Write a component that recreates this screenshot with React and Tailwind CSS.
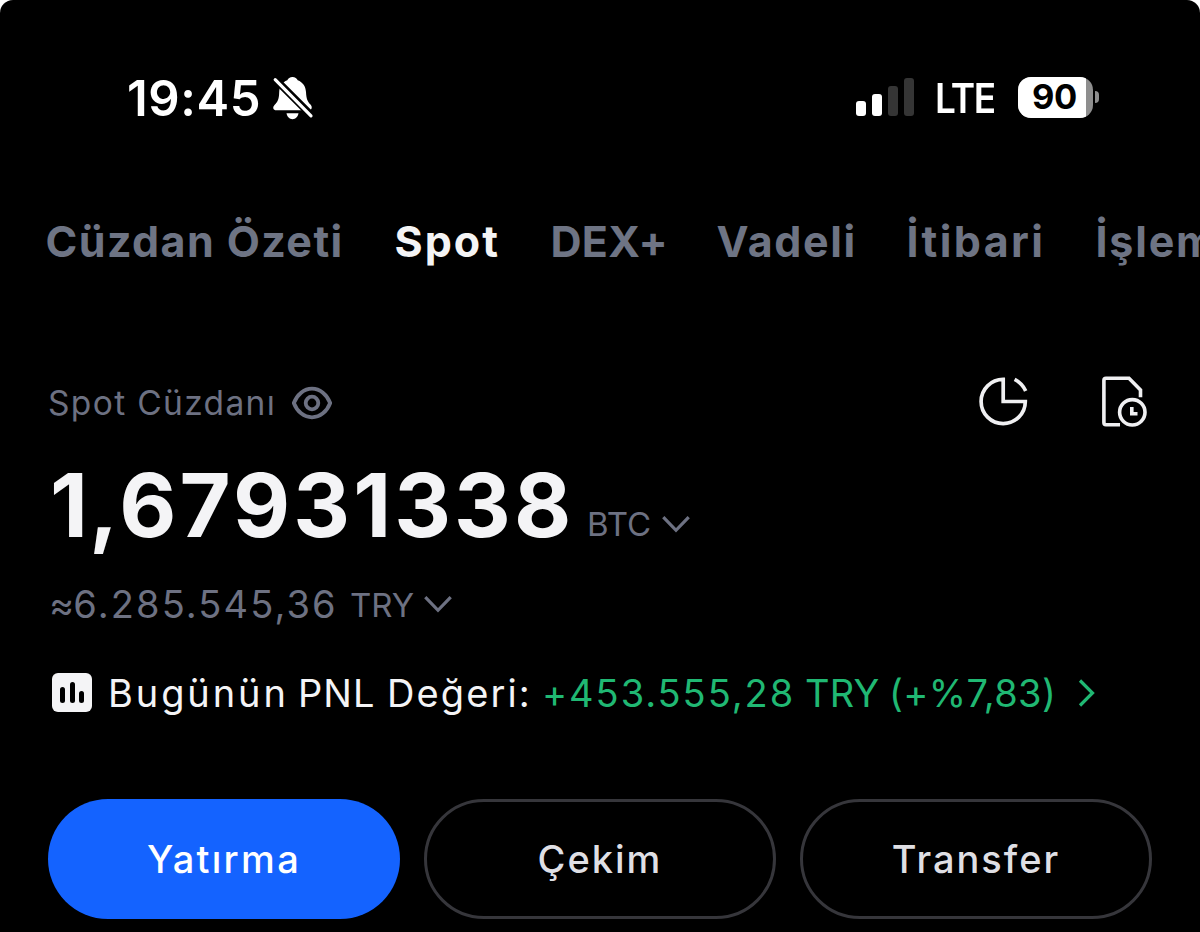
import React from 'react';

const TABS = [
    { label: 'Cüzdan Özeti', className: 'w-[349px] tracking-[1.4px]' },
    { label: 'Spot', className: 'w-[156px] tracking-[2px] text-[#f4f4f5]' },
    { label: 'DEX+', className: 'w-[166px] tracking-[0.3px]' },
    { label: 'Vadeli', className: 'w-[190px] tracking-[1.6px]' },
    { label: 'İtibari', className: 'w-[189px] tracking-[2.4px]' },
    { label: 'İşlem', className: 'w-[120px] tracking-[1.8px]' },
];

const BellOff = () => (
    <svg width="42" height="44" viewBox="272 76 42 44" className="shrink-0">
        <mask id="slash">
            <rect x="272" y="76" width="42" height="44" fill="white" />
            <path d="M272 76 L316 120" stroke="black" strokeWidth="7.4" />
        </mask>
        <g fill="white" mask="url(#slash)">
            <path d="M292.500 77 C295 77 297 78.300 297.700 80.300 C303 82.300 305.600 86.500 306 92 C306.400 99 307.500 101.500 310.500 104.500 C312.500 106.700 312.300 110.300 308.500 110.300 H276.500 C273 110.300 272.300 107.300 274.500 105 C278 101.500 279 99 279.200 92 C279.500 86.500 282 82.300 287.300 80.300 C288 78.300 290 77 292.500 77 Z" />
            <path d="M286.500 113.300 H298.500 C297.800 117 295.500 119.200 292.500 119.200 C289.500 119.200 287.200 117 286.500 113.300 Z" />
        </g>
        <path d="M275.200 79.600 L311 115.900" stroke="white" strokeWidth="3.200" strokeLinecap="round" />
    </svg>
);

const Signal = () => (
    <div className="flex items-end gap-[6px] h-[38px] mb-[2px]">
        <div className="w-[10px] h-[15px] rounded-[3px] bg-white" />
        <div className="w-[10px] h-[22px] rounded-[3px] bg-white" />
        <div className="w-[10px] h-[30px] rounded-[3px] bg-[#353535]" />
        <div className="w-[10px] h-[38px] rounded-[3px] bg-[#353535]" />
    </div>
);

const Battery = () => (
    <div className="flex items-center gap-[2px] mb-px">
        <div className="w-[75px] h-[41px] rounded-[13px] overflow-hidden bg-[#8e8e8e] flex">
            <div className="w-[68px] h-full bg-white text-black flex items-center pl-[14px] pt-px">
                <span className="text-[34.500px] font-bold leading-none tracking-[-0.5px]">90</span>
            </div>
        </div>
        <div className="w-[4px] h-[12px] rounded-r-full bg-[#8e8e8e]" />
    </div>
);

const Chevron = () => (
    <svg width="30" height="20" viewBox="0 0 30 20" fill="none" stroke="currentColor" strokeWidth="3.200" className="shrink-0">
        <path d="M2.300 3.200 L15 16.300 L27.700 3.200" />
    </svg>
);

const Eye = () => (
    <svg width="42" height="36" viewBox="291.500 385 42 36" fill="none" stroke="currentColor" strokeWidth="3.800" className="shrink-0 mt-[2px]">
        <path d="M294.300 403 C297.500 394.500 304.500 388.700 312.500 388.700 C320.500 388.700 327.500 394.500 330.700 403 C327.500 411.500 320.500 417.300 312.500 417.300 C304.500 417.300 297.500 411.500 294.300 403 Z" strokeLinejoin="round" />
        <circle cx="312.500" cy="403" r="6.300" />
    </svg>
);

const PieIcon = () => (
    <svg width="50" height="52" viewBox="978 376 50 52" fill="none" stroke="#f0f0f2" strokeWidth="3.700">
        <path d="M1003.200 379.400 A22.100 22.100 0 1 0 1025.300 401.500 H1003.200 Z" />
        <path d="M1014.600 379.300 A24 24 0 0 1 1025.700 391" />
    </svg>
);

const HistoryIcon = () => (
    <svg width="48" height="52" viewBox="1100 376 48 52" fill="none" stroke="#f0f0f2" strokeWidth="3.600">
        <path d="M1120 424.700 H1106 Q1103.900 424.700 1103.900 422.600 V380.400 Q1103.900 378.300 1106 378.300 H1129 L1140.500 390 V397.300" />
        <circle cx="1132.300" cy="412.300" r="12.700" />
        <path d="M1131.800 407 V413.700 H1137.500" />
    </svg>
);

const PnlIcon = () => (
    <div className="w-[40px] h-[39px] mb-[2px] rounded-[6px] bg-[#f4f4f6] flex items-end justify-center gap-[4.500px] pb-[9px]">
        <div className="w-[5px] h-[16px] rounded-full bg-black" />
        <div className="w-[5px] h-[21px] rounded-full bg-black" />
        <div className="w-[5px] h-[12px] rounded-full bg-black" />
    </div>
);

export default function App() {
    return (
        <div className="w-[1200px] h-[932px] bg-white overflow-hidden">
            <div className="h-full bg-black rounded-t-[13px] overflow-hidden font-['Inter',sans-serif] whitespace-nowrap text-[#6d7182] leading-none">
                {/* Status bar */}
                <div className="h-[195px] flex items-center text-white pl-[127px] pr-[101px]">
                    <div className="w-[145px] pt-[2px] text-[49px] font-semibold tracking-[0.6px]">19:45</div>
                    <BellOff />
                    <div className="ml-auto flex items-center">
                        <Signal />
                        <div className="ml-[20px] w-[84px] pt-[2px]">
                            <div className="origin-left scale-x-90 pl-px text-[41px] font-semibold tracking-[-1.7px]">LTE</div>
                        </div>
                        <Battery />
                    </div>
                </div>

                {/* Tabs */}
                <div className="h-[93px] flex items-center pl-[45.5px] text-[43px] font-bold text-[#6e7484]">
                    {TABS.map((tab) => (
                        <div key={tab.label} className={`shrink-0 ${tab.className}`}>{tab.label}</div>
                    ))}
                </div>

                {/* Balance */}
                <div className="mt-[88px] h-[52px] flex items-center pl-[48px] pr-[52px]">
                    <div className="w-[243px] pt-[4px] text-[33.500px] tracking-[1.35px]">Spot Cüzdanı</div>
                    <Eye />
                    <div className="ml-auto flex items-center gap-[72px]">
                        <PieIcon />
                        <HistoryIcon />
                    </div>
                </div>
                <div className="mt-[32px] h-[90px] flex items-center pl-[50px]">
                    <div className="w-[537px] text-[88px] font-bold tracking-[3.1px] text-[#f4f4f6]">
                        <span className="tracking-[1px]">1,</span>67931338
                    </div>
                    <div className="pt-[39px] flex items-center">
                        <div className="w-[74px] text-[33px]">BTC</div>
                        <div className="mb-[2px]">
                            <Chevron />
                        </div>
                    </div>
                </div>
                <div className="mt-[29px] h-[50px] flex items-center pl-[49px]">
                    <div className="w-[301px] text-[38px] tracking-[2.1px]">
                        <span className="tracking-[-0.8px]">≈</span>6.285.545,36
                    </div>
                    <div className="w-[73px] pt-[2px] text-[33px]">TRY</div>
                    <Chevron />
                </div>

                {/* Daily PNL */}
                <div className="mt-[38px] h-[52px] flex items-center pl-[52px] text-[38px] tracking-[1.950px]">
                    <PnlIcon />
                    <div className="ml-[16px] w-[434px] flex text-[#f4f4f6]">
                        <span className="w-[190px] tracking-[2.9px]">Bugünün</span>
                        <span className="w-[89px] tracking-[1px]">PNL</span>
                        <span className="tracking-[2.1px]">Değeri:</span>
                    </div>
                    <div className="w-[536px] flex text-[#20b873]">
                        <span className="w-[263px]">+453.555,28</span>
                        <span className="w-[84px] tracking-[0.2px]">TRY</span>
                        <span className="tracking-[0.4px]">(+%7,83)</span>
                    </div>
                    <svg width="18" height="30" viewBox="0 0 18 30" fill="none" stroke="#20b873" strokeWidth="3.200">
                        <path d="M2 2.500 L14.500 15 L2 27.500" />
                    </svg>
                </div>

                {/* Actions */}
                <div className="mt-[80px] h-[120px] grid grid-cols-3 gap-[24px] px-[48px] text-[38px] font-medium tracking-[2px]">
                    <button className="rounded-full bg-[#1463ff] text-white tracking-[2.3px]">Yatırma</button>
                    <button className="rounded-full border-[3px] border-[#36363b] text-[#dfdfe4]">Çekim</button>
                    <button className="rounded-full border-[3px] border-[#36363b] text-[#dfdfe4]">Transfer</button>
                </div>
            </div>
        </div>
    );
}
